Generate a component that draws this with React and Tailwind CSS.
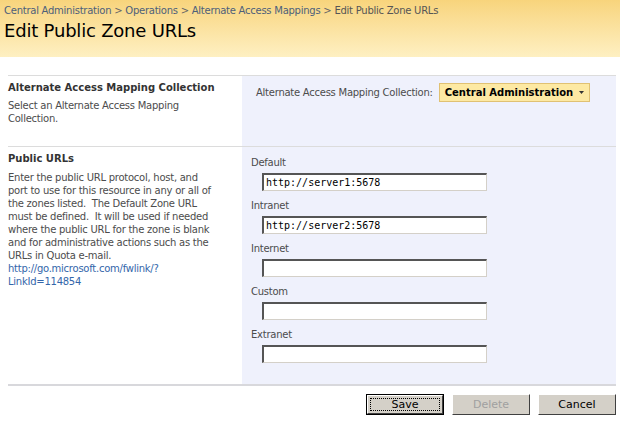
import React from 'react';

const font = "font-['DejaVu_Sans',Tahoma,sans-serif]";

const Field = ({ label, value }) => (
    <div className="flex flex-col mb-2">
        <div className="h-[13px] leading-[13px] text-[#4c4c4c] tracking-[-0.25px]">{label}</div>
        <div className="mt-1 ml-[11px] w-[225px] h-[18px] bg-white border-t-2 border-l-2 border-t-[#555] border-l-[#555] border-b border-r border-b-[#d4d0c8] border-r-[#d4d0c8] font-['DejaVu_Sans_Mono',monospace] text-[10px] leading-[15px] pl-[2px] text-black">
            {value}
        </div>
    </div>
);

const Btn = ({ children, primary, disabled }) => (
    <div className={`w-[78px] h-[21px] bg-[#d4d0c8] flex items-center justify-center text-[11px] ${primary ? 'border border-black' : ''}`}>
        <div className="w-full h-full border-t border-l border-t-white border-l-white border-b border-r border-b-[#404040] border-r-[#404040] flex items-center justify-center">
            <div className={`${primary ? 'border border-dotted border-black' : ''} w-[calc(100%-4px)] h-[calc(100%-4px)] flex items-center justify-center leading-[11px] ${disabled ? 'text-[#a0a0a0]' : 'text-black'}`}>
                {children}
            </div>
        </div>
    </div>
);

const desc = [
    'Enter the public URL protocol, host, and',
    'port to use for this resource in any or all of',
    'the zones listed.\u00a0 The Default Zone URL',
    'must be defined.\u00a0 It will be used if needed',
    'where the public URL for the zone is blank',
    'and for administrative actions such as the',
    'URLs in Quota e-mail.',
];

const App = () => {
    return (
        <div className={`w-[620px] h-[424px] bg-white text-[10px] overflow-hidden ${font}`}>
            {/* Title band */}
            <div className="h-[57px] bg-gradient-to-b from-[#f8d47c] to-[#fef0c2] px-[4px] pt-[4px]">
                <div className="text-[10px] leading-[14px] text-[#4d5f7a] tracking-[-0.25px]">
                    <span>Central Administration</span>
                    <span className="text-[#666]"> &gt; </span>
                    <span>Operations</span>
                    <span className="text-[#666]"> &gt; </span>
                    <span>Alternate Access Mappings</span>
                    <span className="text-[#666]"> &gt; </span>
                    <span className="text-[#555]">Edit Public Zone URLs</span>
                </div>
                <h1 className="text-[18px] leading-[25px] text-black tracking-[-0.2px]">Edit Public Zone URLs</h1>
            </div>

            <div className="ml-[8px] mr-[4px] mt-[18px] border-t border-[#dcdcdc]">
                {/* Section 1 */}
                <div className="flex h-[71px] border-b border-[#dcdcdc]">
                    <div className="w-[234px] pt-[5px] pr-[20px]">
                        <div className="font-bold leading-[13px] text-[#333]">Alternate Access Mapping Collection</div>
                        <div className="mt-[5px] leading-[13px] text-[#4c4c4c] tracking-[-0.25px]">Select an Alternate Access Mapping Collection.</div>
                    </div>
                    <div className="flex-1 bg-[#eff1fc] pl-[14px] pt-[7px] flex items-start">
                        <div className="flex items-center">
                            <span className="text-[#4c4c4c] leading-[13px] tracking-[-0.25px]">Alternate Access Mapping Collection:</span>
                            <div className="ml-[6px] h-[19px] px-[5px] bg-[#fde9a3] border border-[#e0c173] flex items-center font-bold text-black text-[10px]">
                                Central Administration
                                <svg width="5" height="3" viewBox="0 0 5 3" className="ml-[6px]"><path d="M0 0h5L2.5 3z" fill="#333" /></svg>
                            </div>
                        </div>
                    </div>
                </div>

                {/* Section 2 */}
                <div className="flex h-[239px] border-b-2 border-[#d8d8dc]">
                    <div className="w-[234px] pt-[5px] pr-[10px]">
                        <div className="font-bold leading-[13px] text-[#333]">Public URLs</div>
                        <div className="mt-[6px] leading-[13px] text-[#4c4c4c] tracking-[-0.25px] whitespace-nowrap">
                            {desc.map((line) => (
                                <div key={line}>{line}</div>
                            ))}
                        </div>
                        <div className="leading-[13px] text-[#3366aa] tracking-[-0.25px]">http://go.microsoft.com/fwlink/?<br />LinkId=114854</div>
                    </div>
                    <div className="flex-1 bg-[#eff1fc] pl-[9px] pt-[9px]">
                        <Field label="Default" value="http://server1:5678" />
                        <Field label="Intranet" value="http://server2:5678" />
                        <Field label="Internet" value="" />
                        <Field label="Custom" value="" />
                        <Field label="Extranet" value="" />
                    </div>
                </div>

                <div className="flex justify-end gap-[8px] mt-[8px]">
                    <Btn primary>Save</Btn>
                    <Btn disabled>Delete</Btn>
                    <Btn>Cancel</Btn>
                </div>
            </div>
        </div>
    );
};

export default App;
